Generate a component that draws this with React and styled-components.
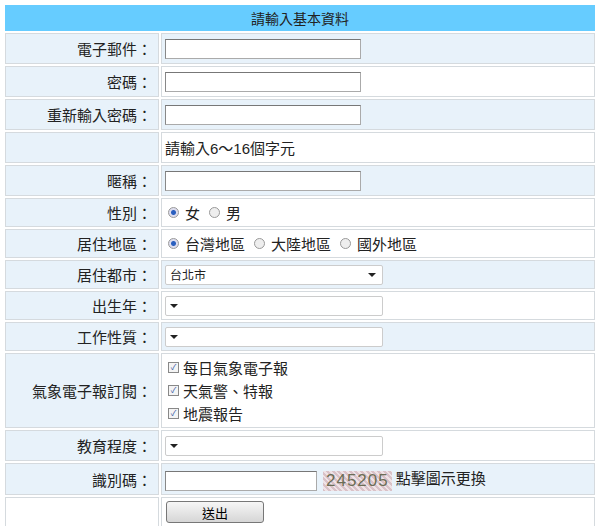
import React from "react";
import styled, {createGlobalStyle} from "styled-components";

const Global = createGlobalStyle`
  body { margin: 0; background: #fff; font-family: "Liberation Sans", "Noto Sans CJK TC", sans-serif; font-size: 14px; color: #222; }
`;

const Form = styled.table`
  margin: 4px 3px;
  width: 594px;
  border-spacing: 2px 2px;
  border-collapse: separate;
  margin-top: 3px;
`;

const Head = styled.th`
  background: #66ccff;
  height: 24px;
  font-weight: normal;
  font-size: 14px;
  border: 1px solid #66ccff;
  padding: 0;
`;

const Label = styled.td`
  width: 146px;
  text-align: right;
  padding: 0 6px 0 0;
  background: ${p => (p.$white ? "#fff" : "#e8f2fa")};
  border: 1px solid #d5dade;
  height: ${p => p.$h || 29}px;
  font-size: 15px;
`;

const Value = styled.td`
  padding: 0 3px;
  background: ${p => (p.$blue ? "#e8f2fa" : "#fff")};
  border: 1px solid #d5dade;
  font-size: 15px;
`;

const TextBox = styled.input`
  width: ${p => p.$w || 190}px;
  height: 18px;
  border: 1px solid #aaa;
  border-top-color: #777;
  border-left-color: #888;
  background: #fff;
  padding: 0 2px;
  vertical-align: middle;
`;

const Select = styled.div`
  width: 218px;
  height: 20px;
  border: 1px solid #ccc;
  border-radius: 2px;
  background: #fff;
  display: flex;
  align-items: center;
  justify-content: space-between;
  padding: 0 6px 0 4px;
  box-sizing: border-box;
  font-size: 12px;
  &::after { content: ""; border: 4px solid transparent; border-top: 4px solid #222; border-bottom: 0; }
`;

const Options = styled.div`
  display: flex;
  align-items: center;
  gap: 6px;
`;

const Radio = styled.span`
  width: 9px;
  height: 9px;
  border-radius: 50%;
  border: 1px solid #999;
  background: ${p => (p.$on ? "radial-gradient(circle, #2a5fbf 0 2px, #dde 3px)" : "#eee")};
  display: inline-block;
  margin-left: 3px;
`;

const Checks = styled.div`
  display: flex;
  flex-direction: column;
  gap: 2px;
  padding: 3px 0;
`;

const Check = styled.label`
  display: flex;
  align-items: center;
  gap: 2px;
  &::before { content: "✓"; width: 9px; height: 9px; border: 1px solid #888; font-size: 8px; line-height: 9px; text-align: center; color: #2a4fa0; background: #f4f4f4; margin: 0 2px 0 3px; }
`;

const Captcha = styled.span`
  display: inline-block;
  margin: 0 4px 0 6px;
  padding: 0 3px;
  background: repeating-linear-gradient(45deg, #d9c2c8 0 2px, #efe3e6 2px 4px);
  color: #6b6d55;
  font-size: 17px;
  letter-spacing: 1px;
  vertical-align: middle;
`;

const Submit = styled.button`
  width: 98px;
  height: 22px;
  border: 1px solid #777;
  border-radius: 3px;
  background: linear-gradient(#f6f6f6, #d6d6d6);
  font-size: 13px;
  font-family: inherit;
  margin-left: 1px;
`;

const Row = ({label, blue, h, white, children}) => (
  <tr>
    <Label $h={h} $white={white}>{label}</Label>
    <Value $blue={blue}>{children}</Value>
  </tr>
);

export default function App() {
  return (
    <>
      <Global/>
      <Form>
        <tbody>
          <tr><Head colSpan={2}>請輸入基本資料</Head></tr>
          <Row label="電子郵件：" blue><TextBox/></Row>
          <Row label="密碼："><TextBox type="password"/></Row>
          <Row label="重新輸入密碼：" blue><TextBox type="password"/></Row>
          <Row label="">請輸入6～16個字元</Row>
          <Row label="暱稱：" blue><TextBox/></Row>
          <Row label="性別：" h={27}><Options><Radio $on/>女<Radio/>男</Options></Row>
          <Row label="居住地區：" h={27}><Options><Radio $on/>台灣地區<Radio/>大陸地區<Radio/>國外地區</Options></Row>
          <Row label="居住都市：" blue h={27}><Select>台北市</Select></Row>
          <Row label="出生年：" h={27}><Select/></Row>
          <Row label="工作性質：" blue h={27}><Select/></Row>
          <Row label="氣象電子報訂閱：" h={68}>
            <Checks>
              <Check>每日氣象電子報</Check>
              <Check>天氣警、特報</Check>
              <Check>地震報告</Check>
            </Checks>
          </Row>
          <Row label="教育程度："><Select/></Row>
          <Row label="識別碼：" blue h={30}><TextBox $w={146}/><Captcha>245205</Captcha>點擊圖示更換</Row>
          <Row label="" white h={28}><Submit>送出</Submit></Row>
        </tbody>
      </Form>
    </>
  );
}
